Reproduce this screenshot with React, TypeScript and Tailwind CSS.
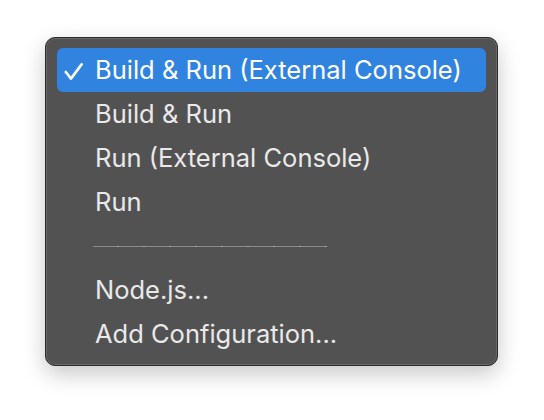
type Item = { label: string; checked?: boolean };

const topItems: Item[] = [
	{ label: "Build & Run (External Console)", checked: true },
	{ label: "Build & Run" },
	{ label: "Run (External Console)" },
	{ label: "Run" },
];

const bottomItems: Item[] = [{ label: "Node.js..." }, { label: "Add Configuration..." }];

function CheckMark() {
	return (
		<svg
			className="absolute left-[6px] top-[14px] h-[20px] w-[20px]"
			viewBox="0 0 20 20"
			fill="none"
			stroke="currentColor"
			strokeWidth={2.6}
			strokeLinecap="round"
			strokeLinejoin="round"
		>
			<polyline points="2.8,10 8,16.6 18.6,2.4" />
		</svg>
	);
}

function MenuRow({ label, checked = false }: Item) {
	return (
		<div
			className={`relative flex h-[44px] items-center rounded-[6px] pl-[38px] ${
				checked ? "bg-[#3084df] text-white" : "text-[#e9e9e9]"
			}`}
		>
			{checked && <CheckMark />}
			<span className="leading-none">{label}</span>
		</div>
	);
}

function Separator() {
	return (
		<div className="flex h-[44px] items-center pl-[36px]">
			<div className="flex">
				{Array.from({ length: 9 }).map((_, i) => (
					<div key={i} className="flex">
						<div className="h-px w-[24px] bg-[#8a8a8a]" />
						<div className="h-px w-[2px] bg-[#a9a9a9]" />
					</div>
				))}
			</div>
		</div>
	);
}

export default function App() {
	return (
		<div className="h-[420px] w-[544px] bg-white pl-[45px] pt-[37px] font-['Inter','Noto_Sans',sans-serif] text-[25.5px]">
			<div className="w-[453px] rounded-[10px] border border-[#2c2c2c] bg-[#525252] px-[11px] pb-[9px] pt-[10px] shadow-[0_8px_22px_rgba(0,0,0,0.22),inset_0_0_0_1px_rgba(255,255,255,0.12)]">
				{topItems.map((item) => (
					<MenuRow key={item.label} {...item} />
				))}
				<Separator />
				{bottomItems.map((item) => (
					<MenuRow key={item.label} {...item} />
				))}
			</div>
		</div>
	);
}
